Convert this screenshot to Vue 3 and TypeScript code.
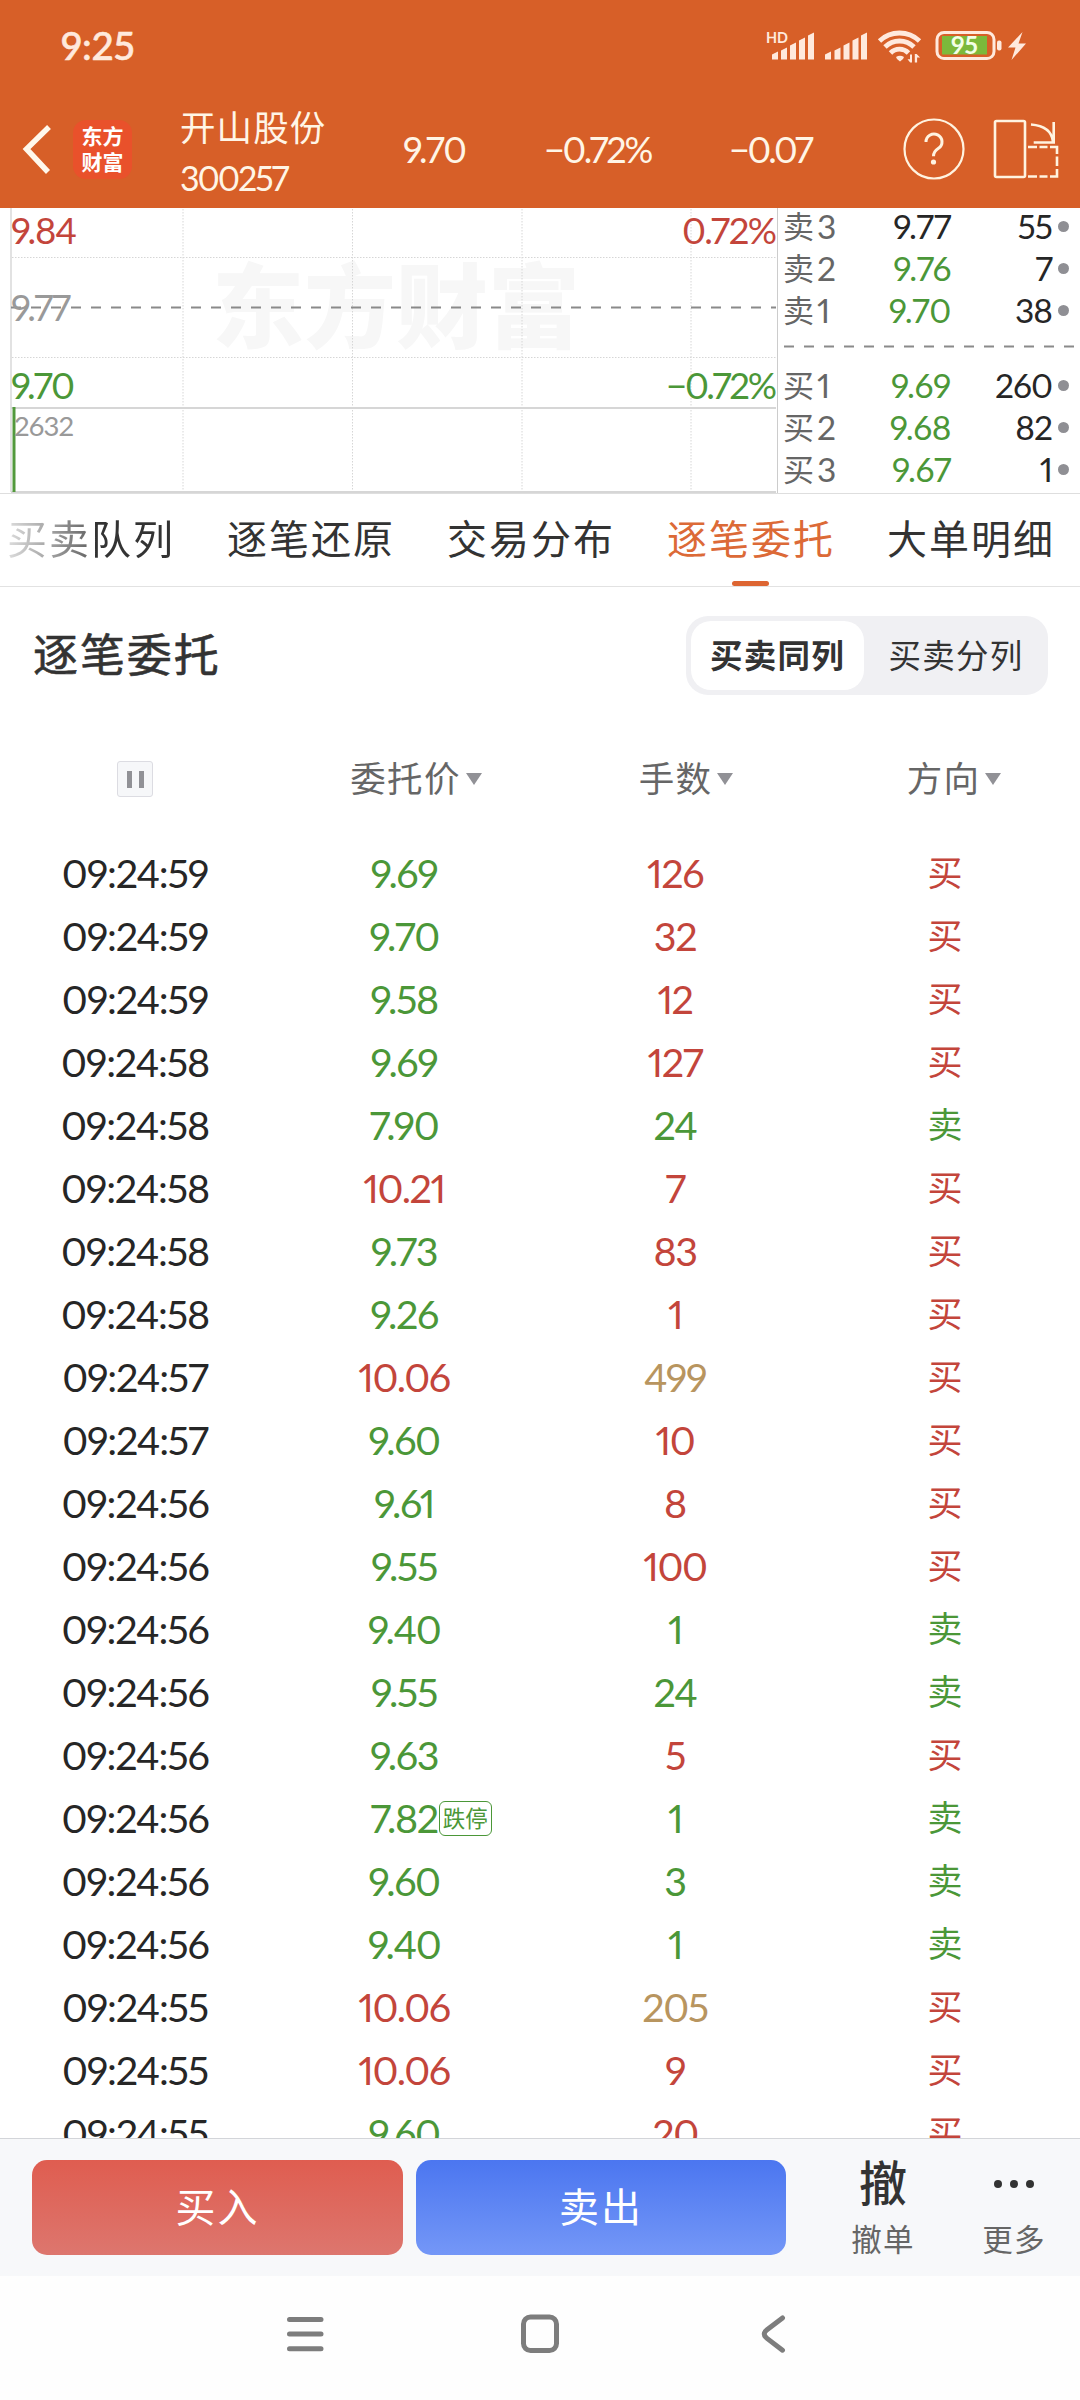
<script setup lang="ts">
type Tone = 'up' | 'down' | 'big' | 'flat'

interface Order {
  time: string
  price: string
  priceTone: Tone
  lots: string
  lotsTone: Tone
  side: '买' | '卖'
  tag?: string
}

interface Quote {
  side: string
  level: number
  price: string
  tone: Tone
  volume: string
}

const order = (
  time: string,
  price: string,
  priceTone: Tone,
  lots: string,
  side: '买' | '卖',
  big = false,
  tag?: string,
): Order => ({
  time: '09:24:' + time,
  price,
  priceTone,
  lots,
  lotsTone: big ? 'big' : side === '买' ? 'up' : 'down',
  side,
  tag,
})

const orders: Order[] = [
  order('59', '9.69', 'down', '126', '买'),
  order('59', '9.70', 'down', '32', '买'),
  order('59', '9.58', 'down', '12', '买'),
  order('58', '9.69', 'down', '127', '买'),
  order('58', '7.90', 'down', '24', '卖'),
  order('58', '10.21', 'up', '7', '买'),
  order('58', '9.73', 'down', '83', '买'),
  order('58', '9.26', 'down', '1', '买'),
  order('57', '10.06', 'up', '499', '买', true),
  order('57', '9.60', 'down', '10', '买'),
  order('56', '9.61', 'down', '8', '买'),
  order('56', '9.55', 'down', '100', '买'),
  order('56', '9.40', 'down', '1', '卖'),
  order('56', '9.55', 'down', '24', '卖'),
  order('56', '9.63', 'down', '5', '买'),
  order('56', '7.82', 'down', '1', '卖', false, '跌停'),
  order('56', '9.60', 'down', '3', '卖'),
  order('56', '9.40', 'down', '1', '卖'),
  order('55', '10.06', 'up', '205', '买', true),
  order('55', '10.06', 'up', '9', '买'),
  order('55', '9.60', 'down', '20', '买'),
]

const asks: Quote[] = [
  { side: '卖', level: 3, price: '9.77', tone: 'flat', volume: '55' },
  { side: '卖', level: 2, price: '9.76', tone: 'down', volume: '7' },
  { side: '卖', level: 1, price: '9.70', tone: 'down', volume: '38' },
]

const bids: Quote[] = [
  { side: '买', level: 1, price: '9.69', tone: 'down', volume: '260' },
  { side: '买', level: 2, price: '9.68', tone: 'down', volume: '82' },
  { side: '买', level: 3, price: '9.67', tone: 'down', volume: '1' },
]

const tabs = ['买卖队列', '逐笔还原', '交易分布', '逐笔委托', '大单明细']
const activeTab = '逐笔委托'
const columns = ['委托价', '手数', '方向']
const gridX = [183, 352.5, 522, 691]
</script>

<template>
  <div class="screen">
    <header class="top">
      <div class="status">
        <span class="clock">9:25</span>
        <svg class="status-icons" width="270" height="44" viewBox="760 24 270 44" fill="#ffe9dd">
          <text x="766" y="42.500" class="hd" textLength="22" lengthAdjust="spacingAndGlyphs">HD</text>
          <g>
            <path d="M772 54.500l6-3v8h-6z" />
            <path d="M781 50.500l6-3v12h-6z" />
            <path d="M790 45.500l6-3v17h-6z" />
            <path d="M799 40.500l6-3v22h-6z" />
            <path d="M808 35.500l6-3v27h-6z" />
            <path d="M825 54.500l6-3v8h-6z" />
            <path d="M834.500 50.500l6-3v12h-6z" />
            <path d="M843.500 45.500l6-3v17h-6z" />
            <path d="M852.500 40.500l6-3v22h-6z" />
            <path d="M861 35.500l6-3v27h-6z" />
          </g>
          <g fill="none" stroke="#ffe9dd" stroke-width="4.800">
            <path d="M879.500 41a29 29 0 0 1 40 0" />
            <path d="M885 47a20.500 20.500 0 0 1 29 0" />
            <path d="M890.500 53a12.500 12.500 0 0 1 18 0" />
          </g>
          <path d="M896 57q4-2.500 8 0l-1 2-3 2.500-3-2.500z" />
          <path d="M912 54.500v8h-1.800l-2.700-3.200h2.500v-4.800zM914.800 62.500v-8.500h1.800l3.500 3.500h-3v5z" />
          <rect x="937" y="32.500" width="57" height="26" rx="7" fill="none" stroke="#ffe9dd" stroke-width="3" />
          <rect x="942" y="36" width="45" height="18.500" fill="#7cb93b" />
          <text x="951" y="54" class="charge" textLength="27" lengthAdjust="spacingAndGlyphs">95</text>
          <rect x="997" y="40.500" width="4.500" height="10" rx="2" />
          <path d="M1022.500 32l-14.500 15.500h7.500l-4 12.500 14.500-16.500h-7.500z" />
        </svg>
      </div>
      <div class="nav">
        <svg class="back" width="40" height="60" viewBox="0 0 40 60">
          <path d="M33 8L10.500 30l21.500 23" fill="none" stroke="#fff8ec" stroke-width="5.500" />
        </svg>
        <div class="logo"><span>东方</span><span>财富</span></div>
        <div class="stock">
          <div class="stock-name">开山股份</div>
          <div class="stock-code">300257</div>
        </div>
        <span class="quote last">9.70</span>
        <span class="quote pct">−0.72%</span>
        <span class="quote diff">−0.07</span>
        <svg class="tools" width="160" height="66" viewBox="900 116 160 66" fill="none" stroke="#fff3e0">
          <circle cx="934" cy="149" r="29.500" stroke-width="2.200" />
          <path d="M926 142a8 7.800 0 1 1 12.500 6.300q-5 3.200-5 8" stroke-width="3" />
          <circle cx="933.500" cy="162" r="2.600" fill="#fff3e0" stroke="none" />
          <rect x="995" y="121" width="30" height="56" rx="1.500" stroke-width="2.600" />
          <g stroke-width="2.600">
            <path d="M1031 124.500q20 1.500 22 17M1053.700 122v20.500h-20" />
            <path d="M1028 147h9M1039.500 147h8M1050 147h7v7M1057 156.500v9.500M1057 169v7.500h-7M1047.500 176.500h-8M1037 176.500h-9" />
          </g>
        </svg>
      </div>
    </header>

    <section class="market">
      <svg class="chart" width="778" height="285" viewBox="0 208 778 285">
        <text x="212" y="341" class="watermark" textLength="368" lengthAdjust="spacingAndGlyphs">东方财富</text>
        <g stroke="#d6d6d6" stroke-width="1" stroke-dasharray="1.500 1.500">
          <line v-for="x in gridX" :key="x" :x1="x" y1="209" :x2="x" y2="491" />
          <line x1="12" y1="257.500" x2="776" y2="257.500" />
          <line x1="12" y1="357.500" x2="776" y2="357.500" />
        </g>
        <line x1="11" y1="208" x2="11" y2="492" stroke="#e2e2e2" stroke-width="2" />
        <line x1="11" y1="408" x2="776" y2="408" stroke="#d6d6d6" stroke-width="2" />
        <line x1="11" y1="492" x2="776" y2="492" stroke="#d6d6d6" stroke-width="2" />
        <line x1="777.500" y1="208" x2="777.500" y2="493" stroke="#cccccc" stroke-width="1" />
        <line x1="11" y1="307.500" x2="776" y2="307.500" stroke="#8a8a8a" stroke-width="2" stroke-dasharray="10 10" />
        <line x1="14" y1="407" x2="14" y2="492" stroke="#52993c" stroke-width="3" />
        <g class="axis">
          <text x="11" y="243.500" fill="#c3453b" textLength="66">9.84</text>
          <text x="11" y="320.500" fill="#999999" textLength="60">9.77</text>
          <text x="11" y="398.500" fill="#4b9738" textLength="64">9.70</text>
          <text x="682" y="243.500" fill="#c3453b" textLength="95">0.72%</text>
          <text x="666" y="398.500" fill="#4b9738" textLength="111">−0.72%</text>
          <text x="14" y="436" fill="#999999" class="axis-small" textLength="60">2632</text>
        </g>
      </svg>
      <div class="book">
        <div v-for="q in asks" :key="q.side + q.level" class="book-row">
          <span class="book-label"><span class="book-side">{{ q.side }}</span>{{ q.level }}</span>
          <span class="book-price" :class="q.tone">{{ q.price }}</span>
          <span class="book-volume">{{ q.volume }}</span>
          <i class="book-dot"></i>
        </div>
        <svg class="book-split" width="302" height="33" viewBox="0 0 302 33">
          <line x1="6" y1="15.500" x2="296" y2="15.500" stroke="#8a8a8a" stroke-width="2" stroke-dasharray="10 10" />
        </svg>
        <div v-for="q in bids" :key="q.side + q.level" class="book-row">
          <span class="book-label"><span class="book-side">{{ q.side }}</span>{{ q.level }}</span>
          <span class="book-price" :class="q.tone">{{ q.price }}</span>
          <span class="book-volume">{{ q.volume }}</span>
          <i class="book-dot"></i>
        </div>
      </div>
    </section>

    <nav class="tabs">
      <div v-for="tab in tabs" :key="tab" class="tab" :class="{ active: tab === activeTab }">
        <span>{{ tab }}</span>
      </div>
    </nav>

    <section class="heading">
      <h1>逐笔委托</h1>
      <div class="segment">
        <span class="on">买卖同列</span>
        <span class="off">买卖分列</span>
      </div>
    </section>

    <section class="table">
      <div class="table-head">
        <div class="cell">
          <div class="pause"><i></i><i></i></div>
        </div>
        <div v-for="name in columns" :key="name" class="cell sortable">
          <span>{{ name }}</span>
          <svg width="16" height="12" viewBox="0 0 16 12"><path d="M0 0h16L8 12z" fill="#919196" /></svg>
        </div>
      </div>
      <div v-for="(row, i) in orders" :key="i" class="table-row">
        <span class="cell time">{{ row.time }}</span>
        <span class="cell price" :class="row.priceTone">
          <span class="price-text">{{ row.price }}<em v-if="row.tag" class="tag">{{ row.tag }}</em></span>
        </span>
        <span class="cell lots" :class="row.lotsTone">{{ row.lots }}</span>
        <span class="cell side" :class="row.side === '买' ? 'up' : 'down'">{{ row.side }}</span>
      </div>
    </section>

    <footer class="actions">
      <button class="buy">买入</button>
      <button class="sell">卖出</button>
      <div class="action">
        <span class="action-icon">撤</span>
        <span class="action-label">撤单</span>
      </div>
      <div class="action more">
        <span class="action-icon dots"><i></i><i></i><i></i></span>
        <span class="action-label">更多</span>
      </div>
    </footer>

    <div class="system">
      <svg width="1080" height="124" viewBox="0 2276 1080 124" fill="none" stroke="#7d7d7d" stroke-width="5" stroke-linecap="round" stroke-linejoin="round">
        <path d="M289.500 2319.500h31.500M289.500 2334h31.500M289.500 2348.700h31.500" />
        <rect x="523.500" y="2317" width="33" height="33.500" rx="7" />
        <path d="M782.500 2318l-15.500 11.800q-5.500 4.300 0 8.600l15.500 11.800" />
      </svg>
    </div>
  </div>
</template>

<style>
body {
  margin: 0;
  background: #fff;
}
</style>

<style scoped>
.screen {
  width: 1080px;
  height: 2400px;
  display: flex;
  flex-direction: column;
  overflow: hidden;
  background: #fff;
  color: #333;
  font-family: 'Lato', 'Noto Sans CJK SC', sans-serif;
  font-feature-settings: 'pnum', 'kern';
}

i,
em {
  font-style: normal;
}

.up { color: #c3453b; }
.down { color: #4b9738; }
.big { color: #b8955f; }
.flat { color: #262626; }

.top {
  height: 208px;
  flex: none;
  background: #d75f28;
  color: #fff5e6;
}

.status {
  height: 94px;
  box-sizing: border-box;
  padding: 24px 50px 0 61px;
  display: flex;
  justify-content: space-between;
  color: #ffe9dd;
}

.clock {
  font-size: 38.5px;
  line-height: 43px;
  font-weight: 500;
  -webkit-text-stroke: 0.6px #ffe9dd;
}

.hd {
  font-size: 15.5px;
  font-weight: 700;
}

.charge {
  font-size: 24px;
  font-weight: 700;
  fill: #f3ffe6;
}

.nav {
  height: 114px;
  display: flex;
  align-items: center;
  padding-bottom: 4px;
  box-sizing: border-box;
}

.nav > * {
  flex: none;
}

.back {
  margin-left: 16px;
}

.logo {
  width: 59px;
  height: 59px;
  box-sizing: border-box;
  margin-left: 17px;
  padding-bottom: 3px;
  border-radius: 13px;
  background: #e9512b;
  color: #fff;
  display: flex;
  flex-direction: column;
  align-items: center;
  justify-content: center;
  font: 700 21px/26px 'Noto Sans CJK SC', sans-serif;
}

.logo span {
  height: 26px;
}

.stock {
  width: 190px;
  margin-left: 48px;
  padding-top: 5px;
}

.stock-name {
  font: 400 35.5px/50px 'Noto Sans CJK SC', sans-serif;
  letter-spacing: 1.1px;
}

.stock-code {
  font-size: 34px;
  line-height: 53px;
  margin-bottom: -2px;
  letter-spacing: -2.1px;
}

.quote {
  font-size: 36px;
  line-height: 46px;
  letter-spacing: -1.5px;
  white-space: nowrap;
}

.last { width: 141px; margin-left: 33px; }
.pct { width: 185px; letter-spacing: -2.3px; }
.diff { width: 171px; letter-spacing: -2.5px; }

.market {
  height: 285px;
  flex: none;
  display: flex;
  border-bottom: 1px solid #dedede;
}

.chart {
  display: block;
  flex: none;
}

.watermark {
  font: 900 92px 'Noto Sans CJK SC', sans-serif;
  fill: #f7f7f7;
}

.axis {
  font-size: 36.5px;
}

.axis-small {
  font-size: 27.5px;
}

.book {
  width: 302px;
  height: 285px;
}

.book-row {
  height: 42px;
  display: grid;
  grid-template-columns: 72px 101px 101px 28px;
  align-items: center;
  font-size: 33.5px;
  line-height: 40px;
  letter-spacing: -0.4px;
  white-space: nowrap;
}

.book-row:first-child {
  margin-top: -3px;
}

.book-label {
  height: 42px;
  padding-left: 5px;
  display: flex;
  align-items: center;
  gap: 3px;
  color: #666;
}

.book-side {
  margin-top: -3px;
  width: 31px;
  font-family: 'Noto Sans CJK SC', sans-serif;
  font-size: 31px;
  letter-spacing: 0;
}

.book-price,
.book-volume {
  text-align: right;
}

.book-volume {
  color: #262626;
  letter-spacing: -1px;
}

.book-dot {
  width: 11px;
  height: 11px;
  margin-left: 6px;
  border-radius: 50%;
  background: #8f8f94;
}

.book-split {
  display: block;
}

.tabs {
  height: 92px;
  flex: none;
  display: flex;
  gap: 52px;
  padding-left: 7px;
  border-bottom: 1px solid #e2e2e2;
  font: 400 40px/86px 'Noto Sans CJK SC', sans-serif;
  white-space: nowrap;
}

.tab {
  width: 168px;
  flex: none;
  letter-spacing: 2px;
  display: flex;
  flex-direction: column;
  align-items: center;
  justify-content: space-between;
}

.tab:first-child span {
  background: linear-gradient(90deg, #ddd 0, #aaa 38px, #888 60px, #666 83px, #333 85px);
  background-clip: text;
  -webkit-background-clip: text;
  color: transparent;
}

.tab.active {
  color: #dc6a37;
}

.tab.active::after {
  content: '';
  width: 37px;
  height: 5px;
  margin-right: 1px;
  border-radius: 2.5px;
  background: #dd6532;
}

.heading {
  height: 137px;
  flex: none;
  box-sizing: border-box;
  display: flex;
  align-items: center;
  justify-content: space-between;
  padding: 0 32px 0 33px;
}

h1 {
  margin: -5px 0 0;
  font: 400 45px/60px 'Noto Sans CJK SC', sans-serif;
  -webkit-text-stroke: 0.6px #333;
  letter-spacing: 1.9px;
}

.segment {
  width: 362px;
  height: 79px;
  box-sizing: border-box;
  padding: 5px;
  border-radius: 22px;
  background: #f0f0f3;
  display: flex;
  font: 400 32.5px/65px 'Noto Sans CJK SC', sans-serif;
  letter-spacing: 1.3px;
}

.segment span {
  flex: 1;
  height: 69px;
  text-align: center;
}

.segment .off {
  padding-left: 5px;
}

.segment .on {
  flex: 0 0 173px;
  border-radius: 20px;
  background: #fff;
  font-weight: 700;
}

.table {
  height: 1414px;
  flex: none;
  overflow: hidden;
}

.table-head,
.table-row {
  display: grid;
  grid-template-columns: repeat(4, 270px);
  justify-items: center;
  align-items: center;
}

.table-head {
  height: 118px;
  box-sizing: border-box;
  padding-bottom: 8px;
  color: #666;
  font: 400 35.5px/52px 'Noto Sans CJK SC', sans-serif;
  letter-spacing: 1.3px;
}

.sortable {
  display: flex;
  align-items: center;
  gap: 5px;
  padding-left: 22px;
}

.sortable:last-child {
  padding-left: 18px;
}

.sortable span {
  margin-top: -5px;
}

.pause {
  width: 34px;
  height: 34px;
  border: 1px solid #dcdce2;
  border-radius: 3px;
  background: #f6f7f9;
  display: flex;
  align-items: center;
  justify-content: center;
  gap: 7px;
}

.pause i {
  width: 5px;
  height: 17px;
  background: #919196;
}

.table-row {
  height: 63px;
  font-size: 39.5px;
  line-height: 63px;
  letter-spacing: -1.4px;
}

.time {
  color: #262626;
  letter-spacing: -1.2px;
}

.price-text {
  position: relative;
  top: -1px;
  left: -1px;
}

.time,
.lots {
  margin-top: -2px;
}

.tag {
  position: absolute;
  left: calc(100% + 1px);
  top: 7px;
  width: 51px;
  height: 33px;
  border: 1px solid #4b9738;
  border-radius: 6px;
  font: 400 22.5px/31px 'Noto Sans CJK SC', sans-serif;
  letter-spacing: 0;
  text-align: center;
}

.side {
  margin-top: -6px;
  font: 400 35px/63px 'Noto Sans CJK SC', sans-serif;
  letter-spacing: 0;
}

.actions {
  height: 138px;
  flex: none;
  box-sizing: border-box;
  border-top: 1px solid #d3d5d9;
  background: #f7f8fa;
  display: flex;
  padding: 21px 0 0 32px;
}

button {
  width: 371px;
  height: 95px;
  padding: 0 0 5px;
  border: 0;
  border-radius: 15px;
  color: #fff;
  font: 400 40px/90px 'Noto Sans CJK SC', sans-serif;
  letter-spacing: 2px;
}

.buy {
  background: linear-gradient(#df5d50, #dd766e);
}

.sell {
  width: 370px;
  margin-left: 13px;
  background: linear-gradient(#4b76f0, #7497f7);
}

.action {
  width: 130px;
  margin-left: 32px;
  display: flex;
  flex-direction: column;
  align-items: center;
  font-family: 'Noto Sans CJK SC', sans-serif;
}

.action.more {
  margin-left: 1px;
}

.action-icon {
  height: 48px;
  font-size: 48px;
  line-height: 41px;
  font-weight: 500;
}

.dots {
  display: flex;
  align-items: center;
  gap: 8px;
}

.dots i {
  width: 8px;
  height: 8px;
  border-radius: 50%;
  background: #333;
}

.action-label {
  margin-top: 8px;
  font-size: 30.5px;
  line-height: 44px;
  letter-spacing: 1.2px;
  color: #666;
}

.system {
  flex: 1;
  background: #fefefe;
}
</style>
